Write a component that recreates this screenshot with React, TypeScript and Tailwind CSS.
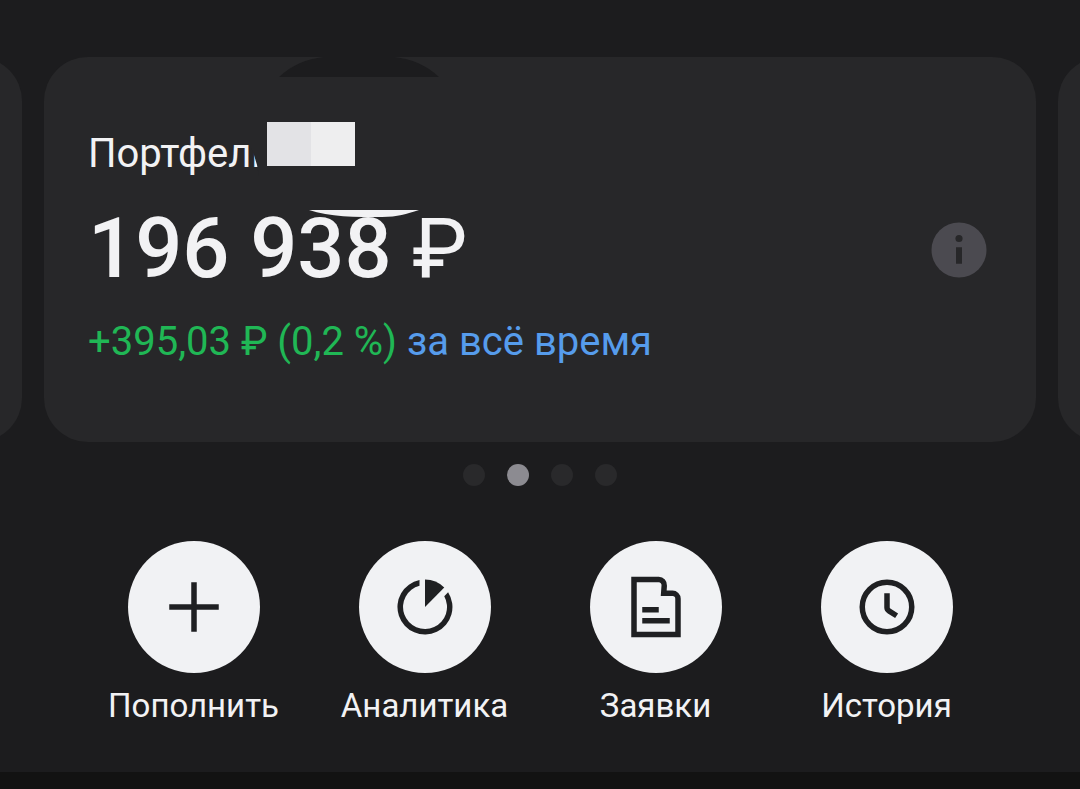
import { useState } from 'react';
import type { ReactNode } from 'react';

const slides = ['Счёт 1', 'Портфель', 'Счёт 3', 'Счёт 4'];

const PlusIcon = () => (
    <path d="M12 3v18M3 12h18" stroke="currentColor" strokeWidth="2" />
);

const AnalyticsIcon = () => (
    <g fill="currentColor">
        <path d="M12 12V2a10 10 0 0 1 7 2.9z" />
        <path d="M10 2.2V4.25A8 8 0 1 0 19 8.1L20.4 6.6A10 10 0 1 1 10 2.2z" />
    </g>
);

const OrdersIcon = () => (
    <g fill="none" stroke="currentColor" strokeWidth="2">
        <path d="M4 2h9a2 2 0 0 1 2 2.2L14.8 7H18a2 2 0 0 1 2 2v13H4z" strokeMiterlimit="10" />
        <path d="M7 13h6M7 17h10" />
    </g>
);

const HistoryIcon = () => (
    <g fill="none" stroke="currentColor" strokeWidth="2">
        <circle cx="12" cy="12" r="9" />
        <path d="M12 7v5.2q0 .8.7 1.2l2.8 1.8" />
    </g>
);

const actions: { title: string; icon: ReactNode }[] = [
    { title: 'Пополнить', icon: <PlusIcon /> },
    { title: 'Аналитика', icon: <AnalyticsIcon /> },
    { title: 'Заявки', icon: <OrdersIcon /> },
    { title: 'История', icon: <HistoryIcon /> },
];

function PortfolioCard() {
    return (
        <article className="relative flex w-[calc(100%-88px)] shrink-0 items-center justify-between rounded-[44px] bg-[#272729] px-11 py-[73px]">
            {/* hidden account details */}
            <svg className="absolute top-0 left-0 h-[170px] w-[400px]" viewBox="0 0 400 170" aria-hidden="true">
                <path d="M235 20C248 8 262 2 280 0H350C368 2 382 8 395 20z" fill="#1c1c1e" />
                <path d="M265 153H375C362 157 354 160 338 160C312 160 285 160 265 153z" fill="#f2f2f4" />
            </svg>
            <div className="pb-[3px]">
                <h2 className="relative w-fit text-[40px] leading-[48px] text-[#f2f2f4]">
                    Портфель
                    <svg className="absolute top-[-10px] left-[163px] h-[56px] w-[105px]" viewBox="0 0 105 56" aria-hidden="true">
                        <path d="M0 0H105V56H8Q6 40 0 28z" fill="#272729" />
                        <path d="M16 2h44v44H16z" fill="#e3e3e6" />
                        <path d="M60 2h44v44H60z" fill="#eeeeef" />
                    </svg>
                </h2>
                <p className="mt-[22px] text-[83px] leading-[98px] font-medium text-[#f2f2f4]">
                    196 938 <span className="font-normal">₽</span>
                </p>
                <p className="mt-5 text-[40px] leading-[48px] text-[#20b755]">
                    +395,03 ₽ (0,2 %){' '}
                    <button type="button" className="text-[#569cec]">
                        за всё время
                    </button>
                </p>
            </div>
            <button type="button" aria-label="Информация" className="text-[#4b4a50]">
                <svg className="h-[66px] w-[66px]" viewBox="0 0 24 24">
                    <circle cx="12" cy="12" r="10" fill="currentColor" />
                    <circle cx="12" cy="7.8" r="1.3" fill="#272729" />
                    <path d="M10.9 11h2.2v6h-2.2z" fill="#272729" />
                </svg>
            </button>
        </article>
    );
}

export default function App() {
    const [active, setActive] = useState(1);

    return (
        <div className="min-h-screen bg-[#121212] font-['Roboto',sans-serif]">
            <main className="bg-[#1c1c1e] pt-[57px] pb-[46px]">
                <section className="flex justify-center gap-[22px] overflow-hidden">
                    <div className="w-[calc(100%-88px)] shrink-0 rounded-[44px] bg-[#272729]" />
                    <PortfolioCard />
                    <div className="w-[calc(100%-88px)] shrink-0 rounded-[44px] bg-[#272729]" />
                </section>

                <div className="mt-[22px] flex justify-center gap-[22px]">
                    {slides.map((slide, index) => (
                        <button
                            key={slide}
                            type="button"
                            aria-label={slide}
                            onClick={() => setActive(index)}
                            className={`h-[22px] w-[22px] rounded-full ${index === active ? 'bg-[#8c8b91]' : 'bg-[#29292b]'}`}
                        />
                    ))}
                </div>

                <nav className="mt-[55px] grid grid-cols-4 px-[78px]">
                    {actions.map((action) => (
                        <button key={action.title} type="button" className="flex flex-col items-center gap-[13px]">
                            <span className="flex h-[132px] w-[132px] items-center justify-center rounded-full bg-[#f1f2f4] text-[#1f2022]">
                                <svg className="h-[66px] w-[66px]" viewBox="0 0 24 24">
                                    {action.icon}
                                </svg>
                            </span>
                            <span className="text-[33px] leading-[40px] text-[#f2f2f4]">{action.title}</span>
                        </button>
                    ))}
                </nav>
            </main>
        </div>
    );
}
